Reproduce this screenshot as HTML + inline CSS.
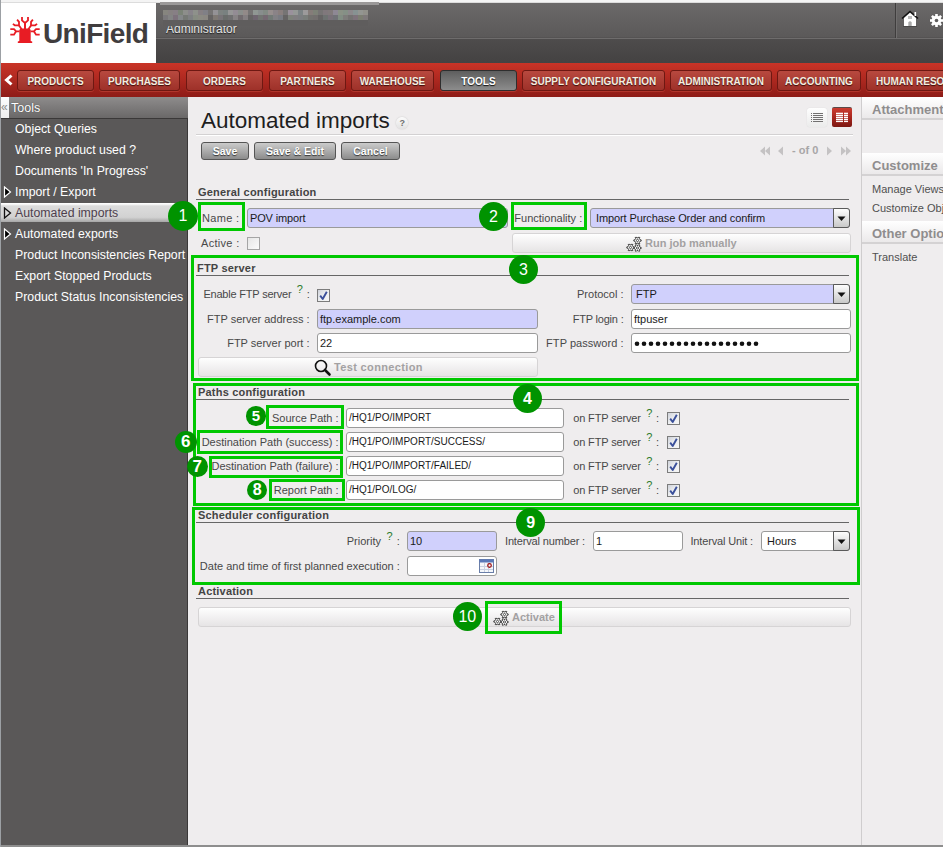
<!DOCTYPE html>
<html><head><meta charset="utf-8">
<style>
*{margin:0;padding:0;box-sizing:border-box}
html,body{width:943px;height:847px;overflow:hidden;background:#efedee;font-family:"Liberation Sans",sans-serif}
.a{position:absolute}
.t{position:absolute;white-space:nowrap;line-height:1}
#top{left:0;top:0;width:943px;height:3px;background:#f4f4f4;border-bottom:1px solid #dcdcdc}
#lb{left:0;top:0;width:1px;height:847px;background:#9ca0a4;z-index:5}
#logo{left:1px;top:3px;width:155px;height:60px;background:#fff}
#hdr{left:156px;top:3px;width:787px;height:60px;background:linear-gradient(#6b6969,#5b5959 34px,#4f4d4d 35px,#6e6c6c 35px,#6e6c6c 36px,#4e4c4c 36px,#444242)}
#menu{left:0;top:63px;width:943px;height:34px;background:linear-gradient(#c93427,#ad2820 50%,#8e1c17)}
.mb{position:absolute;top:70px;height:21px;border:1px solid #6e1812;border-radius:3px;background:linear-gradient(#b8493f,#9e3129);box-shadow:0 1px 0 rgba(255,120,100,.25);color:#f4eee0;font-weight:bold;font-size:10px;line-height:21px;text-align:center;text-shadow:0 1px 1px #3a0a08;white-space:nowrap;overflow:hidden}
.mb.sel{border-color:#2e2e2e;background:linear-gradient(#5e5e5e,#8c8c8c);color:#fff;text-shadow:0 1px 1px #111}
#side{left:1px;top:97px;width:187px;height:748px;background:#5a5858;border-right:1px solid #3a3838}
#sideline{left:188px;top:97px;width:1px;height:748px;background:#fbfbfb}
#shdr{left:1px;top:97px;width:187px;height:22px;background:linear-gradient(#8e8c8c,#6a6868);border-bottom:1px solid #3a3838}
.si{position:absolute;left:15px;color:#fff;font-size:12px;line-height:1;white-space:nowrap}
#bottom{left:0;top:845px;width:943px;height:2px;background:#8e8e8e}
#rp{left:861px;top:97px;width:82px;height:748px;border-left:1px solid #cfcdce;background:#efedee}
.rh{position:absolute;left:862px;width:81px;background:linear-gradient(#fff,#ebe9ea);border-bottom:2px solid #d4d2d3;color:#8e8c8d;font-weight:bold;font-size:14px;white-space:nowrap;overflow:hidden}
.rl{position:absolute;left:872px;color:#555;font-size:11px;line-height:1;white-space:nowrap}
.btn{position:absolute;top:142px;height:18px;border:1px solid #555;border-radius:3px;background:linear-gradient(#cbcbcb,#8c8c8c);color:#fff;font-weight:bold;font-size:10.5px;line-height:17px;text-align:center;text-shadow:0 1px 1px #333;white-space:nowrap}
/*FORMCSS*/.circ{position:absolute;border-radius:50%;background:#009300;color:#fff;text-align:center;font-family:"Liberation Sans",sans-serif}
.inp{position:absolute;border:1px solid #9a9a9a;border-radius:3px;background:#fff}
.inp.lav{background:#d0d0fc}
.dd{position:absolute;border:1px solid #5a5a5a;border-radius:0 3px 3px 0;background:linear-gradient(#fdfdfd,#c9c9c9)}
.cb{position:absolute;width:13px;height:13px;border:1px solid #7c7c7c;background:linear-gradient(135deg,#cfd2da,#eceef0 50%,#f6f6f6)}
.cb.un{border-color:#a5a5a5;background:linear-gradient(135deg,#e6e6e6,#fbfbfb)}
.lbtn{position:absolute;border:1px solid #d6d4d5;border-radius:3px;background:linear-gradient(#fefefe,#e6e4e5)}
/*/FORMCSS*/</style></head><body>
<div class="a" id="top"></div>
<div class="a" id="lb"></div>
<div class="a" id="logo"></div>
<div class="a" id="hdr"></div>
<div class="a" id="menu"></div>
<!--HDR-->
<svg class="a" style="left:0;top:0" width="60" height="60" viewBox="0 0 60 60">
<g fill="none" stroke="#e81c24" stroke-width="1.8" stroke-linecap="butt" stroke-linejoin="miter"><path d="M22.0,17.0 L22.0,20.4 L25.0,23.0 L25.0,29.0"/><path d="M28.0,17.0 L28.0,20.4 L25.0,23.0 L25.0,29.0"/><path d="M17.1,19.6 L19.0,21.8 L19.0,25.5 L21.8,29.4"/><path d="M32.9,19.6 L31.0,21.8 L31.0,25.5 L28.2,29.4"/><path d="M12.9,23.9 L14.8,25.3 L19.0,25.3"/><path d="M37.1,23.9 L35.2,25.3 L31.0,25.3"/><path d="M10.3,29.1 L14.0,29.1 L16.1,31.3 L19.5,31.3"/><path d="M39.7,29.1 L36.0,29.1 L33.9,31.3 L30.5,31.3"/><path d="M16.1,31.3 L14.0,34.7 L10.3,34.7"/><path d="M33.9,31.3 L36.0,34.7 L39.7,34.7"/></g>
<path fill="#e81c24" d="M19.3,30 Q19.8,28.4 21.5,28.4 L28.5,28.4 Q30.2,28.4 30.7,30 L30.7,41 L32.2,41.5 L32.2,43 L17.8,43 L17.8,41.5 L19.3,41 Z"/>
</svg>
<div class="t" id="uf" style="left:43px;top:20px;font-size:28px;font-weight:bold;color:#403d3e;letter-spacing:-0.65px">UniField</div>
<div class="a" style="left:160px;top:2px;width:219px;height:3px;background:#9a9898"></div>
<div class="a" style="left:163px;top:10px;width:5px;height:5px;background:rgb(134,133,127)"></div><div class="a" style="left:163px;top:15px;width:5px;height:5px;background:rgb(122,120,123)"></div><div class="a" style="left:163px;top:20px;width:5px;height:5px;background:rgb(100,91,98)"></div><div class="a" style="left:168px;top:10px;width:5px;height:5px;background:rgb(134,129,129)"></div><div class="a" style="left:168px;top:15px;width:5px;height:5px;background:rgb(131,132,132)"></div><div class="a" style="left:168px;top:20px;width:5px;height:5px;background:rgb(103,107,99)"></div><div class="a" style="left:173px;top:10px;width:5px;height:5px;background:rgb(135,127,133)"></div><div class="a" style="left:173px;top:15px;width:5px;height:5px;background:rgb(125,114,124)"></div><div class="a" style="left:173px;top:20px;width:5px;height:5px;background:rgb(93,103,100)"></div><div class="a" style="left:178px;top:10px;width:5px;height:5px;background:rgb(123,131,119)"></div><div class="a" style="left:178px;top:15px;width:5px;height:5px;background:rgb(132,135,137)"></div><div class="a" style="left:178px;top:20px;width:5px;height:5px;background:rgb(107,108,102)"></div><div class="a" style="left:183px;top:10px;width:5px;height:5px;background:rgb(141,142,139)"></div><div class="a" style="left:183px;top:15px;width:5px;height:5px;background:rgb(118,121,117)"></div><div class="a" style="left:183px;top:20px;width:5px;height:5px;background:rgb(92,97,93)"></div><div class="a" style="left:188px;top:10px;width:5px;height:5px;background:rgb(136,132,138)"></div><div class="a" style="left:188px;top:15px;width:5px;height:5px;background:rgb(126,128,130)"></div><div class="a" style="left:188px;top:20px;width:5px;height:5px;background:rgb(105,101,104)"></div><div class="a" style="left:193px;top:10px;width:5px;height:5px;background:rgb(142,145,139)"></div><div class="a" style="left:193px;top:15px;width:5px;height:5px;background:rgb(135,140,130)"></div><div class="a" style="left:193px;top:20px;width:5px;height:5px;background:rgb(103,104,105)"></div><div class="a" style="left:198px;top:10px;width:5px;height:5px;background:rgb(134,128,131)"></div><div class="a" style="left:198px;top:15px;width:5px;height:5px;background:rgb(139,139,131)"></div><div class="a" style="left:198px;top:20px;width:5px;height:5px;background:rgb(103,102,97)"></div><div class="a" style="left:203px;top:10px;width:5px;height:5px;background:rgb(128,128,134)"></div><div class="a" style="left:203px;top:15px;width:5px;height:5px;background:rgb(139,136,130)"></div><div class="a" style="left:203px;top:20px;width:5px;height:5px;background:rgb(107,96,101)"></div><div class="a" style="left:208px;top:10px;width:5px;height:5px;background:rgb(118,116,116)"></div><div class="a" style="left:208px;top:15px;width:5px;height:5px;background:rgb(102,100,100)"></div><div class="a" style="left:208px;top:20px;width:5px;height:5px;background:rgb(100,98,98)"></div><div class="a" style="left:213px;top:10px;width:5px;height:5px;background:rgb(148,146,150)"></div><div class="a" style="left:213px;top:15px;width:5px;height:5px;background:rgb(127,121,116)"></div><div class="a" style="left:213px;top:20px;width:5px;height:5px;background:rgb(99,99,102)"></div><div class="a" style="left:218px;top:10px;width:5px;height:5px;background:rgb(125,130,128)"></div><div class="a" style="left:218px;top:15px;width:5px;height:5px;background:rgb(120,116,120)"></div><div class="a" style="left:218px;top:20px;width:5px;height:5px;background:rgb(93,97,93)"></div><div class="a" style="left:223px;top:10px;width:5px;height:5px;background:rgb(121,129,128)"></div><div class="a" style="left:223px;top:15px;width:5px;height:5px;background:rgb(106,109,107)"></div><div class="a" style="left:223px;top:20px;width:5px;height:5px;background:rgb(96,105,94)"></div><div class="a" style="left:228px;top:10px;width:5px;height:5px;background:rgb(150,150,150)"></div><div class="a" style="left:228px;top:15px;width:5px;height:5px;background:rgb(112,112,113)"></div><div class="a" style="left:228px;top:20px;width:5px;height:5px;background:rgb(104,108,107)"></div><div class="a" style="left:233px;top:10px;width:5px;height:5px;background:rgb(147,140,148)"></div><div class="a" style="left:233px;top:15px;width:5px;height:5px;background:rgb(135,131,133)"></div><div class="a" style="left:233px;top:20px;width:5px;height:5px;background:rgb(97,99,97)"></div><div class="a" style="left:238px;top:10px;width:5px;height:5px;background:rgb(138,142,139)"></div><div class="a" style="left:238px;top:15px;width:5px;height:5px;background:rgb(114,108,111)"></div><div class="a" style="left:238px;top:20px;width:5px;height:5px;background:rgb(95,101,104)"></div><div class="a" style="left:243px;top:10px;width:5px;height:5px;background:rgb(146,138,136)"></div><div class="a" style="left:243px;top:15px;width:5px;height:5px;background:rgb(132,127,129)"></div><div class="a" style="left:243px;top:20px;width:5px;height:5px;background:rgb(105,100,104)"></div><div class="a" style="left:248px;top:10px;width:5px;height:5px;background:rgb(118,116,116)"></div><div class="a" style="left:248px;top:15px;width:5px;height:5px;background:rgb(102,100,100)"></div><div class="a" style="left:248px;top:20px;width:5px;height:5px;background:rgb(100,98,98)"></div><div class="a" style="left:253px;top:10px;width:5px;height:5px;background:rgb(144,151,147)"></div><div class="a" style="left:253px;top:15px;width:5px;height:5px;background:rgb(111,102,112)"></div><div class="a" style="left:253px;top:20px;width:5px;height:5px;background:rgb(95,94,100)"></div><div class="a" style="left:258px;top:10px;width:5px;height:5px;background:rgb(136,141,141)"></div><div class="a" style="left:258px;top:15px;width:5px;height:5px;background:rgb(114,117,114)"></div><div class="a" style="left:258px;top:20px;width:5px;height:5px;background:rgb(107,100,104)"></div><div class="a" style="left:263px;top:10px;width:5px;height:5px;background:rgb(130,138,132)"></div><div class="a" style="left:263px;top:15px;width:5px;height:5px;background:rgb(117,105,114)"></div><div class="a" style="left:263px;top:20px;width:5px;height:5px;background:rgb(96,100,95)"></div><div class="a" style="left:268px;top:10px;width:5px;height:5px;background:rgb(150,142,141)"></div><div class="a" style="left:268px;top:15px;width:5px;height:5px;background:rgb(114,122,118)"></div><div class="a" style="left:268px;top:20px;width:5px;height:5px;background:rgb(92,100,96)"></div><div class="a" style="left:273px;top:10px;width:5px;height:5px;background:rgb(138,131,135)"></div><div class="a" style="left:273px;top:15px;width:5px;height:5px;background:rgb(129,128,132)"></div><div class="a" style="left:273px;top:20px;width:5px;height:5px;background:rgb(102,100,97)"></div><div class="a" style="left:278px;top:10px;width:5px;height:5px;background:rgb(137,126,125)"></div><div class="a" style="left:278px;top:15px;width:5px;height:5px;background:rgb(121,123,130)"></div><div class="a" style="left:278px;top:20px;width:5px;height:5px;background:rgb(96,97,104)"></div><div class="a" style="left:283px;top:10px;width:5px;height:5px;background:rgb(118,116,116)"></div><div class="a" style="left:283px;top:15px;width:5px;height:5px;background:rgb(102,100,100)"></div><div class="a" style="left:283px;top:20px;width:5px;height:5px;background:rgb(100,98,98)"></div><div class="a" style="left:288px;top:10px;width:5px;height:5px;background:rgb(154,145,156)"></div><div class="a" style="left:288px;top:15px;width:5px;height:5px;background:rgb(126,130,123)"></div><div class="a" style="left:288px;top:20px;width:5px;height:5px;background:rgb(100,104,108)"></div><div class="a" style="left:293px;top:10px;width:5px;height:5px;background:rgb(149,152,150)"></div><div class="a" style="left:293px;top:15px;width:5px;height:5px;background:rgb(128,126,128)"></div><div class="a" style="left:293px;top:20px;width:5px;height:5px;background:rgb(96,102,98)"></div><div class="a" style="left:298px;top:10px;width:5px;height:5px;background:rgb(124,131,133)"></div><div class="a" style="left:298px;top:15px;width:5px;height:5px;background:rgb(124,126,129)"></div><div class="a" style="left:298px;top:20px;width:5px;height:5px;background:rgb(93,104,100)"></div><div class="a" style="left:303px;top:10px;width:5px;height:5px;background:rgb(156,154,155)"></div><div class="a" style="left:303px;top:15px;width:5px;height:5px;background:rgb(122,126,123)"></div><div class="a" style="left:303px;top:20px;width:5px;height:5px;background:rgb(94,102,97)"></div><div class="a" style="left:308px;top:10px;width:5px;height:5px;background:rgb(133,124,121)"></div><div class="a" style="left:308px;top:15px;width:5px;height:5px;background:rgb(115,114,111)"></div><div class="a" style="left:308px;top:20px;width:5px;height:5px;background:rgb(99,102,93)"></div><div class="a" style="left:313px;top:10px;width:5px;height:5px;background:rgb(125,129,119)"></div><div class="a" style="left:313px;top:15px;width:5px;height:5px;background:rgb(115,111,110)"></div><div class="a" style="left:313px;top:20px;width:5px;height:5px;background:rgb(98,98,96)"></div><div class="a" style="left:318px;top:10px;width:5px;height:5px;background:rgb(118,116,116)"></div><div class="a" style="left:318px;top:15px;width:5px;height:5px;background:rgb(102,100,100)"></div><div class="a" style="left:318px;top:20px;width:5px;height:5px;background:rgb(100,98,98)"></div><div class="a" style="left:323px;top:10px;width:5px;height:5px;background:rgb(128,120,124)"></div><div class="a" style="left:323px;top:15px;width:5px;height:5px;background:rgb(110,114,113)"></div><div class="a" style="left:323px;top:20px;width:5px;height:5px;background:rgb(95,93,93)"></div><div class="a" style="left:328px;top:10px;width:5px;height:5px;background:rgb(129,122,123)"></div><div class="a" style="left:328px;top:15px;width:5px;height:5px;background:rgb(121,113,121)"></div><div class="a" style="left:328px;top:20px;width:5px;height:5px;background:rgb(92,99,102)"></div><div class="a" style="left:333px;top:10px;width:5px;height:5px;background:rgb(142,136,148)"></div><div class="a" style="left:333px;top:15px;width:5px;height:5px;background:rgb(113,114,119)"></div><div class="a" style="left:333px;top:20px;width:5px;height:5px;background:rgb(106,104,98)"></div><div class="a" style="left:338px;top:10px;width:5px;height:5px;background:rgb(138,145,133)"></div><div class="a" style="left:338px;top:15px;width:5px;height:5px;background:rgb(129,141,131)"></div><div class="a" style="left:338px;top:20px;width:5px;height:5px;background:rgb(91,90,91)"></div><div class="a" style="left:343px;top:10px;width:5px;height:5px;background:rgb(133,144,134)"></div><div class="a" style="left:343px;top:15px;width:5px;height:5px;background:rgb(126,125,123)"></div><div class="a" style="left:343px;top:20px;width:5px;height:5px;background:rgb(97,93,97)"></div><div class="a" style="left:348px;top:10px;width:5px;height:5px;background:rgb(140,136,139)"></div><div class="a" style="left:348px;top:15px;width:5px;height:5px;background:rgb(116,115,114)"></div><div class="a" style="left:348px;top:20px;width:5px;height:5px;background:rgb(101,96,97)"></div><div class="a" style="left:353px;top:10px;width:5px;height:5px;background:rgb(135,146,146)"></div><div class="a" style="left:353px;top:15px;width:5px;height:5px;background:rgb(126,115,123)"></div><div class="a" style="left:353px;top:20px;width:5px;height:5px;background:rgb(92,97,99)"></div><div class="a" style="left:358px;top:10px;width:5px;height:5px;background:rgb(147,149,145)"></div><div class="a" style="left:358px;top:15px;width:5px;height:5px;background:rgb(124,126,114)"></div><div class="a" style="left:358px;top:20px;width:5px;height:5px;background:rgb(96,101,106)"></div><div class="a" style="left:363px;top:10px;width:5px;height:5px;background:rgb(145,144,138)"></div><div class="a" style="left:363px;top:15px;width:5px;height:5px;background:rgb(126,121,122)"></div><div class="a" style="left:363px;top:20px;width:5px;height:5px;background:rgb(93,93,98)"></div>
<div class="t" style="left:166px;top:23px;font-size:12px;color:#e2e2e2;text-shadow:0 1px 1px #222">Administrator</div>
<div class="a" style="left:163px;top:20px;width:205px;height:6px;background:#5f5d5d"></div>
<div class="a" style="left:895px;top:3px;width:1px;height:35px;background:#3f3d3d;box-shadow:1px 0 0 #706e6e"></div>
<svg class="a" style="left:900px;top:9px" width="20" height="20" viewBox="0 0 20 20">
<path d="M2,9.5 L10,2.5 L18,9.5" fill="none" stroke="#111" stroke-width="1.6"/>
<path d="M4,9 L10,3.8 L16,9 L16,17 L4,17 Z" fill="#fff"/>
<rect x="14.5" y="3" width="1.6" height="4" fill="#fff"/>
<rect x="8" y="7" width="4" height="3" fill="#bbb"/>
<path d="M8.3,17 L8.3,13.2 Q10,11.5 11.7,13.2 L11.7,17 Z" fill="#aaa"/>
<rect x="3" y="17" width="14" height="1" fill="#333" opacity=".5"/>
</svg>
<svg class="a" style="left:929px;top:13px" width="15" height="15" viewBox="0 0 15 15">
<g fill="#fff"><circle cx="7.5" cy="7.5" r="4.8"/>
<rect x="6.2" y="1" width="2.6" height="13"/><rect x="1" y="6.2" width="13" height="2.6"/>
<rect x="6.2" y="1" width="2.6" height="13" transform="rotate(45 7.5 7.5)"/><rect x="6.2" y="1" width="2.6" height="13" transform="rotate(-45 7.5 7.5)"/></g>
<circle cx="7.5" cy="7.5" r="1.8" fill="#5e5c5c"/>
</svg>
<svg class="a" style="left:4px;top:74px" width="10" height="12" viewBox="0 0 10 12"><path d="M7.5,1.5 L2.5,6 L7.5,10.5" fill="none" stroke="#fff" stroke-width="3"/></svg>
<div class="mb" style="left:17px;width:77px">PRODUCTS</div>
<div class="mb" style="left:99px;width:81px">PURCHASES</div>
<div class="mb" style="left:186px;width:77px">ORDERS</div>
<div class="mb" style="left:269px;width:77px">PARTNERS</div>
<div class="mb" style="left:351px;width:83px">WAREHOUSE</div>
<div class="mb sel" style="left:440px;width:77px">TOOLS</div>
<div class="mb" style="left:522px;width:143px">SUPPLY CONFIGURATION</div>
<div class="mb" style="left:670px;width:102px">ADMINISTRATION</div>
<div class="mb" style="left:777px;width:84px">ACCOUNTING</div>
<div class="mb" style="left:866px;width:110px;text-align:left;padding-left:9px">HUMAN RESOURCES</div>
<!--/HDR-->
<div class="a" id="side"></div>
<div class="a" id="shdr"></div>
<!--SIDE-->
<div class="a" style="left:1px;top:97px;width:8px;height:21px;background:linear-gradient(#fdfdfd,#eeeeee)"></div>
<div class="t" style="left:1px;top:101px;font-size:12px;color:#8a8a8a">&laquo;</div>
<div class="t" style="left:11px;top:102px;font-size:12.5px;color:#fff;text-shadow:0 0 1px #333">Tools</div>
<div class="a" style="left:1px;top:203px;width:187px;height:19px;background:linear-gradient(#fdfdfd,#fdfdfd 1px,#dcdcdc 3px,#d2d2d2 75%,#a6a6a6)"></div>
<div class="t" style="left:15px;top:123px;font-size:12.3px;color:#fff">Object Queries</div>
<div class="t" style="left:15px;top:144px;font-size:12.3px;color:#fff">Where product used ?</div>
<div class="t" style="left:15px;top:165px;font-size:12.3px;color:#fff">Documents &#39;In Progress&#39;</div>
<div class="t" style="left:15px;top:186px;font-size:12.3px;color:#fff">Import / Export</div>
<svg class="a" style="left:3px;top:186px" width="9" height="12" viewBox="0 0 9 12"><path d="M1.5,1 L7.5,6 L1.5,11 Z" fill="#000" stroke="#fff" stroke-width="1.2"/></svg>
<div class="t" style="left:15px;top:207px;font-size:12.3px;color:#4e3f4e">Automated imports</div>
<svg class="a" style="left:3px;top:207px" width="9" height="12" viewBox="0 0 9 12"><path d="M1.5,1 L7.5,6 L1.5,11 Z" fill="#d8d8d8" stroke="#111" stroke-width="1.3"/></svg>
<div class="t" style="left:15px;top:228px;font-size:12.3px;color:#fff">Automated exports</div>
<svg class="a" style="left:3px;top:228px" width="9" height="12" viewBox="0 0 9 12"><path d="M1.5,1 L7.5,6 L1.5,11 Z" fill="#000" stroke="#fff" stroke-width="1.2"/></svg>
<div class="t" style="left:15px;top:249px;font-size:12.3px;color:#fff">Product Inconsistencies Report</div>
<div class="t" style="left:15px;top:270px;font-size:12.3px;color:#fff">Export Stopped Products</div>
<div class="t" style="left:15px;top:291px;font-size:12.3px;color:#fff">Product Status Inconsistencies</div>
<!--/SIDE-->
<div class="a" id="rp"></div>
<!--RP-->
<div class="rh" style="top:97px;height:23px"></div>
<div class="t" style="left:872px;top:103px;font-size:13px;font-weight:bold;color:#8f8d8e">Attachments</div>
<div class="rh" style="top:153px;height:23px"></div>
<div class="t" style="left:872px;top:159px;font-size:13px;font-weight:bold;color:#8f8d8e">Customize</div>
<div class="t" style="left:872px;top:184px;font-size:11px;color:#505050">Manage Views</div>
<div class="t" style="left:872px;top:203px;font-size:11px;color:#505050">Customize Objects</div>
<div class="rh" style="top:221px;height:23px"></div>
<div class="t" style="left:872px;top:227px;font-size:13px;font-weight:bold;color:#8f8d8e">Other Options</div>
<div class="t" style="left:872px;top:252px;font-size:11px;color:#505050">Translate</div>
<!--/RP-->
<div class="a" id="bottom"></div>
<!--TITLE-->
<div class="t" style="left:201px;top:110px;font-size:22.5px;color:#1e1e1e">Automated imports</div>
<div class="a" style="left:396px;top:117px;width:12px;height:12px;border-radius:6px;background:linear-gradient(#fbfbfb,#e2e2e2);box-shadow:0 0 1.5px #b8b8b8"></div>
<div class="t" style="left:399.5px;top:118.5px;font-size:9px;color:#6e6e6e;font-weight:bold">?</div>
<div class="a" style="left:196px;top:134px;width:657px;height:1px;background:#d3d1d2;box-shadow:0 1px 0 #fff"></div>
<div class="btn" style="left:201px;width:48px">Save</div>
<div class="btn" style="left:254px;width:82px">Save &amp; Edit</div>
<div class="btn" style="left:341px;width:59px">Cancel</div>
<div class="a" style="left:807px;top:108px;width:20px;height:19px;border-radius:3px;background:linear-gradient(#fefefe,#ebebeb);box-shadow:0 0 1px #c8c8c8"></div>
<svg class="a" style="left:807px;top:108px" width="20" height="19"><g fill="#727070"><rect x="4" y="5" width="1" height="1"/><rect x="6" y="5" width="10" height="1"/><rect x="4" y="7" width="1" height="1"/><rect x="6" y="7" width="10" height="1"/><rect x="4" y="9" width="1" height="1"/><rect x="6" y="9" width="10" height="1"/><rect x="4" y="11" width="1" height="1"/><rect x="6" y="11" width="10" height="1"/><rect x="4" y="13" width="1" height="1"/><rect x="6" y="13" width="10" height="1"/></g></svg>
<div class="a" style="left:832px;top:107px;width:20px;height:20px;border-radius:2px;border-top:1px solid #5a4a48;background:linear-gradient(#cc3c30,#a8261e 50%,#7c1812)"></div>
<svg class="a" style="left:832px;top:107px" width="20" height="20"><g fill="#fff"><rect x="4" y="5.7" width="7" height="1.4"/><rect x="12" y="5.7" width="4" height="1.4"/><rect x="4" y="7.7" width="7" height="1.4"/><rect x="12" y="7.7" width="4" height="1.4"/><rect x="4" y="9.7" width="7" height="1.4"/><rect x="12" y="9.7" width="4" height="1.4"/><rect x="4" y="11.7" width="7" height="1.4"/><rect x="12" y="11.7" width="4" height="1.4"/><rect x="4" y="13.7" width="7" height="1.4"/><rect x="12" y="13.7" width="4" height="1.4"/></g></svg>
<svg class="a" style="left:758px;top:144px" width="96" height="14" viewBox="0 0 96 14"><g fill="#c4c2c3">
<path d="M2,7 L7,2.5 L7,11.5 Z"/><path d="M7,7 L12,2.5 L12,11.5 Z"/>
<path d="M20,7 L25,2.5 L25,11.5 Z"/>
<path d="M69,2.5 L74,7 L69,11.5 Z"/>
<path d="M83,2.5 L88,7 L83,11.5 Z"/><path d="M88,2.5 L93,7 L88,11.5 Z"/></g></svg>
<div class="t" style="left:792px;top:145px;font-size:11px;font-weight:bold;color:#a8a6a7">- of 0</div>
<!--/TITLE-->
<!--FORM--><div class="t" style="left:198px;top:187px;font-size:11px;color:#444;font-weight:bold;letter-spacing:0.2px;">General configuration</div>
<div class="a" style="left:196px;top:199px;width:653px;height:1px;background:#666"></div>
<div class="a" style="left:198px;top:202px;width:47px;height:29px;border:3px solid #00c800"></div>
<div class="t" style="right:703.5px;top:213px;font-size:11px;color:#484848;text-align:right;letter-spacing:0.35px;">Name :</div>
<div class="inp lav" style="left:247px;top:208px;width:261px;height:20px;"></div>
<div class="t" style="left:250px;top:213px;font-size:11px;color:#1a1a1a;letter-spacing:-0.15px;">POV import</div>
<div class="t" style="right:703.5px;top:238px;font-size:11px;color:#484848;text-align:right;letter-spacing:0.3px;">Active :</div>
<div class="cb un" style="left:247px;top:237px"></div>
<div class="a" style="left:511px;top:202px;width:76px;height:28px;border:3px solid #00c800"></div>
<div class="t" style="right:360.79999999999995px;top:213px;font-size:11px;color:#484848;text-align:right;">Functionality :</div>
<div class="inp lav" style="left:590px;top:208px;width:260px;height:20px;"></div>
<div class="t" style="left:596px;top:213px;font-size:11px;color:#1a1a1a;letter-spacing:-0.1px;">Import Purchase Order and confirm</div>
<div class="dd" style="left:833px;top:208px;width:17px;height:20px"></div>
<svg class="a" style="left:837px;top:216px" width="9" height="6"><path d="M0.5,0.5 L8.5,0.5 L4.5,5 Z" fill="#111"/></svg>
<div class="lbtn" style="left:512px;top:233px;width:339px;height:20px"></div>
<svg class="a" style="left:626px;top:236px" width="17" height="17" viewBox="0 0 17 17"><path d="M14.11,3.80 L15.15,3.92 L15.15,5.08 L14.11,5.20 L13.41,6.41 L13.83,7.38 L12.83,7.95 L12.20,7.11 L10.80,7.11 L10.17,7.95 L9.17,7.38 L9.59,6.41 L8.89,5.20 L7.85,5.08 L7.85,3.92 L8.89,3.80 L9.59,2.59 L9.17,1.62 L10.17,1.05 L10.80,1.89 L12.20,1.89 L12.83,1.05 L13.83,1.62 L13.41,2.59 Z" fill="#fff" stroke="#3a3a3a" stroke-width="1"/><circle cx="11.5" cy="4.5" r="1.1" fill="none" stroke="#3a3a3a" stroke-width="0.9"/><path d="M7.11,10.80 L8.15,10.92 L8.15,12.08 L7.11,12.20 L6.41,13.41 L6.83,14.38 L5.83,14.95 L5.20,14.11 L3.80,14.11 L3.17,14.95 L2.17,14.38 L2.59,13.41 L1.89,12.20 L0.85,12.08 L0.85,10.92 L1.89,10.80 L2.59,9.59 L2.17,8.62 L3.17,8.05 L3.80,8.89 L5.20,8.89 L5.83,8.05 L6.83,8.62 L6.41,9.59 Z" fill="#fff" stroke="#3a3a3a" stroke-width="1"/><circle cx="4.5" cy="11.5" r="1.1" fill="none" stroke="#3a3a3a" stroke-width="0.9"/><path d="M14.11,11.30 L15.15,11.42 L15.15,12.58 L14.11,12.70 L13.41,13.91 L13.83,14.88 L12.83,15.45 L12.20,14.61 L10.80,14.61 L10.17,15.45 L9.17,14.88 L9.59,13.91 L8.89,12.70 L7.85,12.58 L7.85,11.42 L8.89,11.30 L9.59,10.09 L9.17,9.12 L10.17,8.55 L10.80,9.39 L12.20,9.39 L12.83,8.55 L13.83,9.12 L13.41,10.09 Z" fill="#fff" stroke="#3a3a3a" stroke-width="1"/><circle cx="11.5" cy="12" r="1.1" fill="none" stroke="#3a3a3a" stroke-width="0.9"/></svg>
<div class="t" style="left:645px;top:238px;font-size:11px;color:#a3a1a2;font-weight:bold;letter-spacing:0.2px;letter-spacing:0;">Run job manually</div>
<div class="a" style="left:191px;top:255px;width:668px;height:126px;border:3px solid #00c800"></div>
<div class="t" style="left:197px;top:263px;font-size:11px;color:#444;font-weight:bold;letter-spacing:0.2px;">FTP server</div>
<div class="a" style="left:196px;top:275px;width:653px;height:1px;background:#666"></div>
<div class="t" style="right:633.5px;top:289px;font-size:11px;color:#484848;text-align:right;letter-spacing:-0.2px;">Enable FTP server <span style="position:relative;top:-5px;margin-left:2.5px;margin-right:1px;color:#2a7a2a;font-size:11px">?</span> :</div>
<div class="cb" style="left:317px;top:289px"></div>
<svg class="a" style="left:317px;top:289px" width="13" height="13"><path d="M3.2,6.6 L5.7,10 L9.8,2.8" fill="none" stroke="#3a4f9a" stroke-width="1.9" stroke-linejoin="round"/></svg>
<div class="t" style="right:633.5px;top:314px;font-size:11px;color:#484848;text-align:right;">FTP server address :</div>
<div class="inp lav" style="left:317px;top:309px;width:221px;height:20px;"></div>
<div class="t" style="left:320px;top:314px;font-size:11px;color:#1a1a1a;">ftp.example.com</div>
<div class="t" style="right:633.5px;top:338px;font-size:11px;color:#484848;text-align:right;">FTP server port :</div>
<div class="inp" style="left:317px;top:333px;width:221px;height:20px;"></div>
<div class="t" style="left:320px;top:338px;font-size:11px;color:#1a1a1a;">22</div>
<div class="lbtn" style="left:198px;top:357px;width:340px;height:20px"></div>
<svg class="a" style="left:313px;top:359px" width="19" height="18" viewBox="0 0 19 18"><circle cx="8" cy="7" r="5.5" fill="none" stroke="#111" stroke-width="1.6"/><path d="M12,11 L16.5,15.5" stroke="#111" stroke-width="2.6" stroke-linecap="round"/></svg>
<div class="t" style="left:334px;top:362px;font-size:11px;color:#a3a1a2;font-weight:bold;letter-spacing:0.2px;letter-spacing:0.35px;">Test connection</div>
<div class="t" style="right:319.5px;top:289px;font-size:11px;color:#484848;text-align:right;">Protocol :</div>
<div class="inp lav" style="left:631px;top:284px;width:219px;height:20px;"></div>
<div class="t" style="left:636px;top:289px;font-size:11px;color:#1a1a1a;">FTP</div>
<div class="dd" style="left:833px;top:284px;width:17px;height:20px"></div>
<svg class="a" style="left:837px;top:292px" width="9" height="6"><path d="M0.5,0.5 L8.5,0.5 L4.5,5 Z" fill="#111"/></svg>
<div class="t" style="right:319.5px;top:314px;font-size:11px;color:#484848;text-align:right;letter-spacing:-0.2px;">FTP login :</div>
<div class="inp" style="left:631px;top:309px;width:220px;height:20px;"></div>
<div class="t" style="left:634px;top:314px;font-size:11px;color:#1a1a1a;">ftpuser</div>
<div class="t" style="right:319.5px;top:338px;font-size:11px;color:#484848;text-align:right;letter-spacing:0.04px;">FTP password :</div>
<div class="inp" style="left:631px;top:333px;width:220px;height:20px;"></div>
<svg class="a" style="left:634px;top:340px" width="126" height="8"><circle cx="3.0" cy="3.8" r="2.3" fill="#111"/><circle cx="10.0" cy="3.8" r="2.3" fill="#111"/><circle cx="17.0" cy="3.8" r="2.3" fill="#111"/><circle cx="24.0" cy="3.8" r="2.3" fill="#111"/><circle cx="31.0" cy="3.8" r="2.3" fill="#111"/><circle cx="38.0" cy="3.8" r="2.3" fill="#111"/><circle cx="45.0" cy="3.8" r="2.3" fill="#111"/><circle cx="52.0" cy="3.8" r="2.3" fill="#111"/><circle cx="59.0" cy="3.8" r="2.3" fill="#111"/><circle cx="66.0" cy="3.8" r="2.3" fill="#111"/><circle cx="73.0" cy="3.8" r="2.3" fill="#111"/><circle cx="80.0" cy="3.8" r="2.3" fill="#111"/><circle cx="87.0" cy="3.8" r="2.3" fill="#111"/><circle cx="94.0" cy="3.8" r="2.3" fill="#111"/><circle cx="101.0" cy="3.8" r="2.3" fill="#111"/><circle cx="108.0" cy="3.8" r="2.3" fill="#111"/><circle cx="115.0" cy="3.8" r="2.3" fill="#111"/><circle cx="122.0" cy="3.8" r="2.3" fill="#111"/></svg>
<div class="a" style="left:193px;top:383px;width:666px;height:123px;border:3px solid #00c800"></div>
<div class="t" style="left:198px;top:387px;font-size:11px;color:#444;font-weight:bold;letter-spacing:0.2px;">Paths configuration</div>
<div class="a" style="left:196px;top:399px;width:653px;height:1px;background:#666"></div>
<div class="t" style="right:604.4px;top:413px;font-size:11px;color:#484848;text-align:right;">Source Path :</div>
<div class="inp" style="left:346px;top:408px;width:218px;height:20px;"></div>
<div class="t" style="left:349px;top:413px;font-size:10px;color:#1a1a1a;">/HQ1/PO/IMPORT</div>
<div class="t" style="right:284px;top:413px;font-size:11px;color:#484848;text-align:right;letter-spacing:-0.15px;">on FTP server <span style="position:relative;top:-5px;margin-left:2.5px;margin-right:1px;color:#2a7a2a;font-size:11px">?</span> :</div>
<div class="cb" style="left:667px;top:412px"></div>
<svg class="a" style="left:667px;top:412px" width="13" height="13"><path d="M3.2,6.6 L5.7,10 L9.8,2.8" fill="none" stroke="#3a4f9a" stroke-width="1.9" stroke-linejoin="round"/></svg>
<div class="t" style="right:604.4px;top:437px;font-size:11px;color:#484848;text-align:right;">Destination Path (success) :</div>
<div class="inp" style="left:346px;top:432px;width:218px;height:20px;"></div>
<div class="t" style="left:349px;top:437px;font-size:10px;color:#1a1a1a;">/HQ1/PO/IMPORT/SUCCESS/</div>
<div class="t" style="right:284px;top:437px;font-size:11px;color:#484848;text-align:right;letter-spacing:-0.15px;">on FTP server <span style="position:relative;top:-5px;margin-left:2.5px;margin-right:1px;color:#2a7a2a;font-size:11px">?</span> :</div>
<div class="cb" style="left:667px;top:436px"></div>
<svg class="a" style="left:667px;top:436px" width="13" height="13"><path d="M3.2,6.6 L5.7,10 L9.8,2.8" fill="none" stroke="#3a4f9a" stroke-width="1.9" stroke-linejoin="round"/></svg>
<div class="t" style="right:604.4px;top:461px;font-size:11px;color:#484848;text-align:right;">Destination Path (failure) :</div>
<div class="inp" style="left:346px;top:456px;width:218px;height:20px;"></div>
<div class="t" style="left:349px;top:461px;font-size:10px;color:#1a1a1a;">/HQ1/PO/IMPORT/FAILED/</div>
<div class="t" style="right:284px;top:461px;font-size:11px;color:#484848;text-align:right;letter-spacing:-0.15px;">on FTP server <span style="position:relative;top:-5px;margin-left:2.5px;margin-right:1px;color:#2a7a2a;font-size:11px">?</span> :</div>
<div class="cb" style="left:667px;top:460px"></div>
<svg class="a" style="left:667px;top:460px" width="13" height="13"><path d="M3.2,6.6 L5.7,10 L9.8,2.8" fill="none" stroke="#3a4f9a" stroke-width="1.9" stroke-linejoin="round"/></svg>
<div class="t" style="right:604.4px;top:485px;font-size:11px;color:#484848;text-align:right;">Report Path :</div>
<div class="inp" style="left:346px;top:480px;width:218px;height:20px;"></div>
<div class="t" style="left:349px;top:485px;font-size:10px;color:#1a1a1a;">/HQ1/PO/LOG/</div>
<div class="t" style="right:284px;top:485px;font-size:11px;color:#484848;text-align:right;letter-spacing:-0.15px;">on FTP server <span style="position:relative;top:-5px;margin-left:2.5px;margin-right:1px;color:#2a7a2a;font-size:11px">?</span> :</div>
<div class="cb" style="left:667px;top:484px"></div>
<svg class="a" style="left:667px;top:484px" width="13" height="13"><path d="M3.2,6.6 L5.7,10 L9.8,2.8" fill="none" stroke="#3a4f9a" stroke-width="1.9" stroke-linejoin="round"/></svg>
<div class="a" style="left:266px;top:405px;width:78px;height:24px;border:3px solid #00c800"></div>
<div class="a" style="left:197px;top:430px;width:146px;height:24px;border:3px solid #00c800"></div>
<div class="a" style="left:209px;top:456px;width:134px;height:22px;border:3px solid #00c800"></div>
<div class="a" style="left:269px;top:479px;width:76px;height:22px;border:3px solid #00c800"></div>
<div class="a" style="left:192px;top:507px;width:668px;height:78px;border:3px solid #00c800"></div>
<div class="t" style="left:198px;top:510px;font-size:11px;color:#444;font-weight:bold;letter-spacing:0.2px;">Scheduler configuration</div>
<div class="a" style="left:196px;top:522px;width:653px;height:1px;background:#666"></div>
<div class="t" style="right:543.2px;top:536px;font-size:11px;color:#484848;text-align:right;">Priority <span style="position:relative;top:-5px;margin-left:2.5px;margin-right:1px;color:#2a7a2a;font-size:11px">?</span> :</div>
<div class="inp lav" style="left:407px;top:531px;width:90px;height:20px;"></div>
<div class="t" style="left:410px;top:536px;font-size:11px;color:#1a1a1a;">10</div>
<div class="t" style="right:358px;top:536px;font-size:11px;color:#484848;text-align:right;letter-spacing:-0.15px;">Interval number :</div>
<div class="inp" style="left:593px;top:531px;width:90px;height:20px;"></div>
<div class="t" style="left:596px;top:536px;font-size:11px;color:#1a1a1a;">1</div>
<div class="t" style="right:190px;top:536px;font-size:11px;color:#484848;text-align:right;letter-spacing:-0.15px;">Interval Unit :</div>
<div class="inp" style="left:761px;top:531px;width:89px;height:20px;"></div>
<div class="t" style="left:767px;top:536px;font-size:11px;color:#1a1a1a;">Hours</div>
<div class="dd" style="left:833px;top:531px;width:17px;height:20px"></div>
<svg class="a" style="left:837px;top:539px" width="9" height="6"><path d="M0.5,0.5 L8.5,0.5 L4.5,5 Z" fill="#111"/></svg>
<div class="t" style="right:543.2px;top:561px;font-size:11px;color:#484848;text-align:right;">Date and time of first planned execution :</div>
<div class="inp" style="left:407px;top:556px;width:90px;height:20px;"></div>
<svg class="a" style="left:479px;top:559px" width="15" height="14" viewBox="0 0 15 14"><rect x="0.5" y="0.5" width="14" height="13" fill="#f4f6fa" stroke="#6a7ea8"/><rect x="0.5" y="0.5" width="14" height="3" fill="#5a78b8"/><g stroke="#c8d0e0" stroke-width="1"><path d="M1,7.5 H14 M1,10.5 H14 M5.5,4 V13 M9.5,4 V13"/></g><circle cx="10.5" cy="6.5" r="1.8" fill="none" stroke="#a01010" stroke-width="1.2"/></svg>
<div class="t" style="left:198px;top:586px;font-size:11px;color:#444;font-weight:bold;letter-spacing:0.2px;">Activation</div>
<div class="a" style="left:196px;top:598px;width:653px;height:1px;background:#666"></div>
<div class="lbtn" style="left:198px;top:607px;width:653px;height:20px"></div>
<svg class="a" style="left:493px;top:610px" width="17" height="17" viewBox="0 0 17 17"><path d="M14.11,3.80 L15.15,3.92 L15.15,5.08 L14.11,5.20 L13.41,6.41 L13.83,7.38 L12.83,7.95 L12.20,7.11 L10.80,7.11 L10.17,7.95 L9.17,7.38 L9.59,6.41 L8.89,5.20 L7.85,5.08 L7.85,3.92 L8.89,3.80 L9.59,2.59 L9.17,1.62 L10.17,1.05 L10.80,1.89 L12.20,1.89 L12.83,1.05 L13.83,1.62 L13.41,2.59 Z" fill="#fff" stroke="#3a3a3a" stroke-width="1"/><circle cx="11.5" cy="4.5" r="1.1" fill="none" stroke="#3a3a3a" stroke-width="0.9"/><path d="M7.11,10.80 L8.15,10.92 L8.15,12.08 L7.11,12.20 L6.41,13.41 L6.83,14.38 L5.83,14.95 L5.20,14.11 L3.80,14.11 L3.17,14.95 L2.17,14.38 L2.59,13.41 L1.89,12.20 L0.85,12.08 L0.85,10.92 L1.89,10.80 L2.59,9.59 L2.17,8.62 L3.17,8.05 L3.80,8.89 L5.20,8.89 L5.83,8.05 L6.83,8.62 L6.41,9.59 Z" fill="#fff" stroke="#3a3a3a" stroke-width="1"/><circle cx="4.5" cy="11.5" r="1.1" fill="none" stroke="#3a3a3a" stroke-width="0.9"/><path d="M14.11,11.30 L15.15,11.42 L15.15,12.58 L14.11,12.70 L13.41,13.91 L13.83,14.88 L12.83,15.45 L12.20,14.61 L10.80,14.61 L10.17,15.45 L9.17,14.88 L9.59,13.91 L8.89,12.70 L7.85,12.58 L7.85,11.42 L8.89,11.30 L9.59,10.09 L9.17,9.12 L10.17,8.55 L10.80,9.39 L12.20,9.39 L12.83,8.55 L13.83,9.12 L13.41,10.09 Z" fill="#fff" stroke="#3a3a3a" stroke-width="1"/><circle cx="11.5" cy="12" r="1.1" fill="none" stroke="#3a3a3a" stroke-width="0.9"/></svg>
<div class="t" style="left:512px;top:612px;font-size:11px;color:#a3a1a2;font-weight:bold;letter-spacing:0.2px;letter-spacing:0;">Activate</div>
<div class="a" style="left:485px;top:601px;width:77px;height:33px;border:3px solid #00c800"></div>
<div class="circ" style="left:168.0px;top:200.5px;width:30.0px;height:30.0px;font-size:16px;line-height:30.0px;">1</div>
<div class="circ" style="left:478.8px;top:201.6px;width:29.5px;height:29.5px;font-size:16px;line-height:29.5px;">2</div>
<div class="circ" style="left:508.8px;top:254.8px;width:29.5px;height:29.5px;font-size:16px;line-height:29.5px;">3</div>
<div class="circ" style="left:512.6px;top:383.6px;width:29.5px;height:29.5px;font-size:16px;line-height:29.5px;font-weight:bold;">4</div>
<div class="circ" style="left:246.2px;top:406.2px;width:19.5px;height:19.5px;font-size:15px;line-height:19.5px;font-weight:bold;">5</div>
<div class="circ" style="left:174.7px;top:430.7px;width:22.0px;height:22.0px;font-size:17px;line-height:22.0px;font-weight:bold;">6</div>
<div class="circ" style="left:186.8px;top:456.1px;width:21.0px;height:21.0px;font-size:17px;line-height:21.0px;font-weight:bold;">7</div>
<div class="circ" style="left:247.3px;top:479.7px;width:20.0px;height:20.0px;font-size:16px;line-height:20.0px;font-weight:bold;">8</div>
<div class="circ" style="left:515.9px;top:507.5px;width:29.5px;height:29.5px;font-size:16px;line-height:29.5px;font-weight:bold;">9</div>
<div class="circ" style="left:452.6px;top:601.8px;width:29.5px;height:29.5px;font-size:16px;line-height:29.5px;">10</div><!--/FORM-->
</body></html>
